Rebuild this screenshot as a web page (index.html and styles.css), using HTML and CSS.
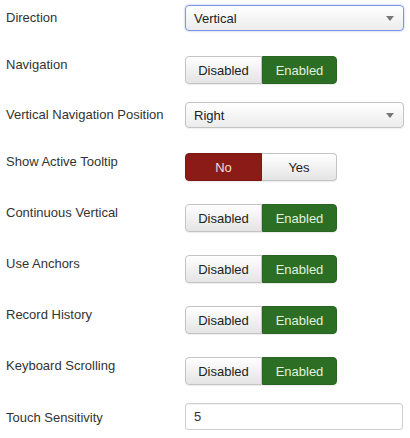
FILE: index.html
```html
<!DOCTYPE html>
<html>
<head>
<meta charset="utf-8">
<link rel="stylesheet" href="styles.css">
</head>
<body>
<form class="form">
  <div class="row row-select">
    <label class="label">Direction</label>
    <div class="select focus"><span>Vertical</span><i class="caret"></i></div>
  </div>
  <div class="row row-toggle short">
    <label class="label">Navigation</label>
    <div class="toggle"><span class="opt off">Disabled</span><span class="opt on green">Enabled</span></div>
  </div>
  <div class="row row-select">
    <label class="label">Vertical Navigation Position</label>
    <div class="select"><span>Right</span><i class="caret"></i></div>
  </div>
  <div class="row row-toggle">
    <label class="label">Show Active Tooltip</label>
    <div class="toggle"><span class="opt on red">No</span><span class="opt off">Yes</span></div>
  </div>
  <div class="row row-toggle">
    <label class="label">Continuous Vertical</label>
    <div class="toggle"><span class="opt off">Disabled</span><span class="opt on green">Enabled</span></div>
  </div>
  <div class="row row-toggle">
    <label class="label">Use Anchors</label>
    <div class="toggle"><span class="opt off">Disabled</span><span class="opt on green">Enabled</span></div>
  </div>
  <div class="row row-toggle">
    <label class="label">Record History</label>
    <div class="toggle"><span class="opt off">Disabled</span><span class="opt on green">Enabled</span></div>
  </div>
  <div class="row row-toggle short">
    <label class="label">Keyboard Scrolling</label>
    <div class="toggle"><span class="opt off">Disabled</span><span class="opt on green">Enabled</span></div>
  </div>
  <div class="row row-input">
    <label class="label">Touch Sensitivity</label>
    <div class="input">5</div>
  </div>
</form>
</body>
</html>
```
FILE: styles.css
```css
* { box-sizing: border-box; }
html, body { margin: 0; padding: 0; background: #fff; }
body {
  font-family: "Liberation Sans", Arial, Helvetica, sans-serif;
  font-size: 13px;
  color: #333;
  width: 410px;
  height: 438px;
  overflow: hidden;
}
.form { display: flex; flex-direction: column; padding: 5px 0 0 0; }
.row { display: flex; align-items: flex-start; height: 51px; }
.row.short { height: 46px; }
.label {
  width: 185px;
  flex: none;
  padding-left: 6px;
  line-height: 18px;
  color: #333;
}
.row-select .label { padding-top: 4px; }
.row-toggle .label { padding-top: 0; }
.row-input .label { padding-top: 6px; }

.select {
  width: 219px;
  height: 26px;
  border: 1px solid #c3c3c3;
  border-radius: 4px;
  background: linear-gradient(#ffffff, #ececec);
  display: flex;
  align-items: center;
  justify-content: space-between;
  padding: 0 9px 0 8px;
  color: #222;
  box-shadow: 0 1px 1px rgba(0,0,0,0.06);
}
.select.focus {
  border-color: #7e95e0;
  box-shadow: 0 0 2px rgba(90, 120, 220, 0.6);
}
.caret {
  width: 0; height: 0;
  border-left: 4px solid transparent;
  border-right: 4px solid transparent;
  border-top: 5px solid #777;
  margin-top: 1px;
}
.toggle {
  display: flex;
  height: 28px;
  border-radius: 4px;
  box-shadow: 0 1px 1px rgba(0,0,0,0.08);
}
.opt {
  display: flex;
  align-items: center;
  justify-content: center;
  height: 28px;
  font-size: 13px;
}
.opt:first-child { width: 77px; border-radius: 4px 0 0 4px; }
.opt:last-child { width: 75px; border-radius: 0 4px 4px 0; }
.opt.off {
  background: linear-gradient(#ffffff, #e4e4e4);
  border: 1px solid #c4c4c4;
  color: #222;
}
.opt.off:first-child { border-right: 1px solid #c4c4c4; }
.opt.off:last-child { border-left: none; }
.opt.on.green {
  background: #2d6e25;
  color: #e3f0de;
  border: 1px solid #2a6422;
}
.opt.on.red {
  background: #8a1b16;
  color: #f5dcda;
  border: 1px solid #7e1712;
}
.input {
  width: 218px;
  height: 27px;
  border: 1px solid #cfcfcf;
  border-radius: 3px;
  padding: 0 8px;
  display: flex;
  align-items: center;
  color: #333;
  box-shadow: inset 0 1px 1px rgba(0,0,0,0.05);
}
```
